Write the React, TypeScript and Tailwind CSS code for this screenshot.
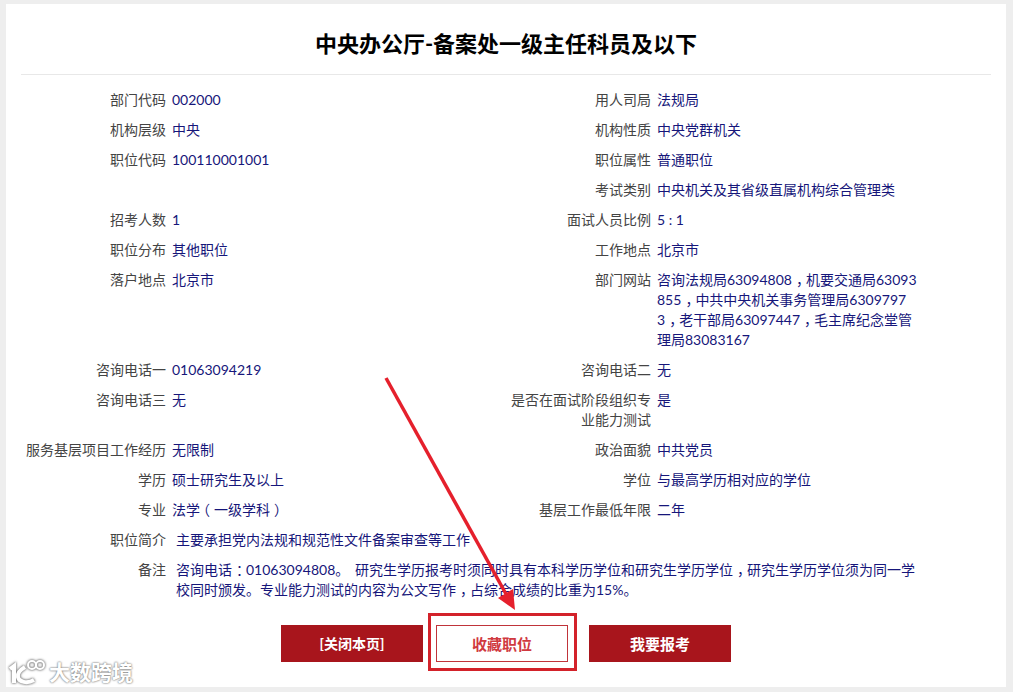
const rows: [string, string, string, string][] = [
  ["部门代码", "002000", "用人司局", "法规局"],
  ["机构层级", "中央", "机构性质", "中央党群机关"],
  ["职位代码", "100110001001", "职位属性", "普通职位"],
  ["", "", "考试类别", "中央机关及其省级直属机构综合管理类"],
  ["招考人数", "1", "面试人员比例", "5 : 1"],
  ["职位分布", "其他职位", "工作地点", "北京市"],
  ["落户地点", "北京市", "部门网站", "咨询法规局63094808，机要交通局63093\n855，中共中央机关事务管理局6309797\n3，老干部局63097447，毛主席纪念堂管\n理局83083167"],
  ["咨询电话一", "01063094219", "咨询电话二", "无"],
  ["咨询电话三", "无", "是否在面试阶段组织专业能力测试", "是"],
  ["服务基层项目工作经历", "无限制", "政治面貌", "中共党员"],
  ["学历", "硕士研究生及以上", "学位", "与最高学历相对应的学位"],
  ["专业", "法学（一级学科）", "基层工作最低年限", "二年"],
];

// fullwidth punctuation sits centred in its cell in the screenshot
const Txt = ({ text }: { text: string }) => (
  <>
    {text.split(/([，：）（])/).map((part, i) =>
      i % 2 === 0 ? (
        part
      ) : part === "（" ? (
        <span key={i} className="inline-block -translate-x-[4px]">
          {part}
        </span>
      ) : (
        <span key={i} className="inline-block w-[14px] pl-[4px] tracking-[-4px]">
          {part}
        </span>
      ),
    )}
  </>
);

const Cell = ({ label, value }: { label: string; value: string }) => (
  <div className="flex py-[5px]">
    <div className="w-[145px] shrink-0 text-right text-[#444]">{label}</div>
    <div className="ml-[6px] w-[280px] whitespace-pre-line text-[#16167a]">
      <Txt text={value} />
    </div>
  </div>
);

const Wide = ({ label, value }: { label: string; value: string }) => (
  <div className="flex py-[5px]">
    <div className="w-[145px] shrink-0 text-right text-[#444]">{label}</div>
    <div className="ml-[10px] w-[742px] text-[#16167a] [word-spacing:2px]">
      <Txt text={value} />
    </div>
  </div>
);

export default function App() {
  return (
    <div className="relative h-[692px] w-[1013px] overflow-hidden bg-[#eeeeee] pt-[4px] pl-[6px] font-['Lato','Noto_Sans_CJK_SC',sans-serif] text-[14px] leading-[20px]">
      <div className="h-[683px] w-[1000px] bg-white px-[15px]">
        <h1 className="h-[71px] border-b border-[#e8e8e8] pt-[22px] text-center text-[22px] leading-[36px] font-bold text-black">
          中央办公厅-备案处一级主任科员及以下
        </h1>
        <div className="pt-[10px]">
          <div className="grid grid-cols-[485px_485px]">
            {rows.map((r, i) => [
              <Cell key={i + "l"} label={r[0]} value={r[1]} />,
              <Cell key={i + "r"} label={r[2]} value={r[3]} />,
            ])}
          </div>
          <Wide label="职位简介" value="主要承担党内法规和规范性文件备案审查等工作" />
          <Wide
            label="备注"
            value="咨询电话：01063094808。 研究生学历报考时须同时具有本科学历学位和研究生学历学位，研究生学历学位须为同一学校同时颁发。专业能力测试的内容为公文写作，占综合成绩的比重为15%。"
          />
        </div>
        <div className="mt-[20px] ml-[260px] flex items-center">
          <button className="h-[37px] w-[142px] bg-[#a8151c] font-bold text-white">[关闭本页]</button>
          <button className="ml-[13px] h-[37px] w-[132px] border border-[#c0343a] bg-white text-[15px] font-bold text-[#d0393f]">收藏职位</button>
          <button className="ml-[21px] h-[37px] w-[142px] bg-[#a8151c] text-[15px] font-bold text-white">我要报考</button>
        </div>
      </div>

      {/* annotation */}
      <div className="absolute top-[613px] left-[428px] h-[58px] w-[149px] border-[3px] border-[#d3222a]" />
      <svg className="absolute top-0 left-0" width="1013" height="692">
        <line x1="386" y1="378" x2="506" y2="594" stroke="#e5202c" strokeWidth="3.5" />
        <polygon points="515,610 498,598 513,589" fill="#e5202c" />
      </svg>

      {/* watermark */}
      <div className="absolute top-[658px] left-[8px] flex items-center">
        <svg
          width="38"
          height="28"
          viewBox="0 0 38 28"
          fill="none"
          stroke="#fff"
          className="[filter:drop-shadow(0_0_1px_#777)_drop-shadow(0_0_1px_#aaa)]"
        >
          <path d="M2 11l4-3v17" strokeWidth="4" />
          <path d="M17 9c-5 3-8 6-7 10 1 5 9 7 16 3" strokeWidth="4" />
          <circle cx="24" cy="7" r="4" strokeWidth="2" />
          <circle cx="32" cy="7" r="4" strokeWidth="2" />
        </svg>
        <span className="ml-[3px] text-[21px] leading-[28px] font-bold text-white [text-shadow:0_0_2px_#777,0_0_2px_#999]">大数跨境</span>
      </div>
    </div>
  );
}
